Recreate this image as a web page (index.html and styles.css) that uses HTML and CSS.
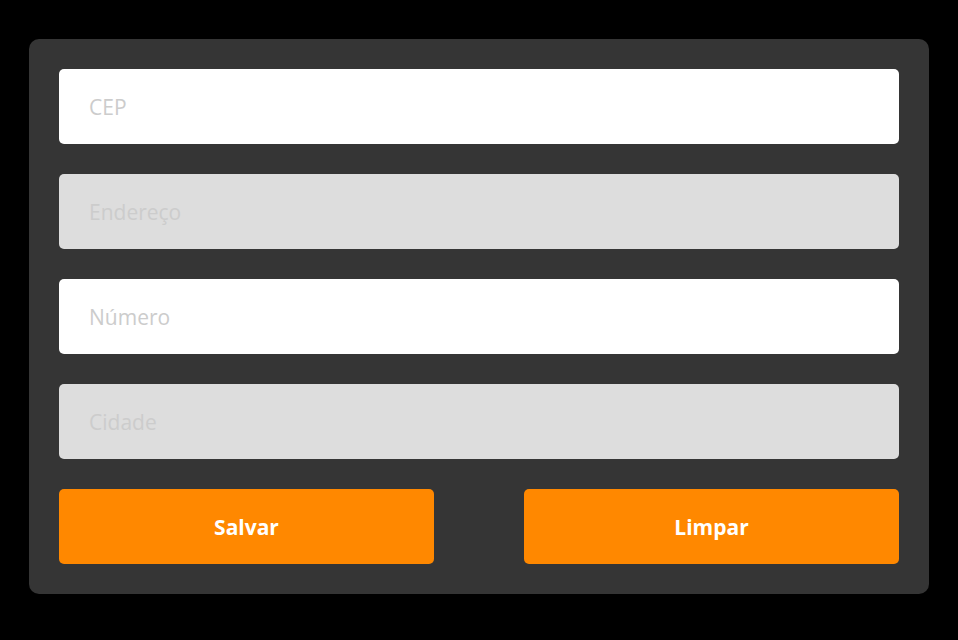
FILE: index.html
```html
<!DOCTYPE html>
<html lang="pt-BR">
<head>
<meta charset="utf-8">
<title>Endereço</title>
<link rel="stylesheet" href="styles.css">
</head>
<body>
<form class="card">
  <input class="field" type="text" placeholder="CEP">
  <input class="field field-disabled" type="text" placeholder="Endereço" disabled>
  <input class="field" type="text" placeholder="Número">
  <input class="field field-disabled" type="text" placeholder="Cidade" disabled>
  <div class="actions">
    <button type="button" class="btn">Salvar</button>
    <button type="button" class="btn">Limpar</button>
  </div>
</form>
</body>
</html>
```
FILE: styles.css
```css
html, body {
  margin: 0;
  padding: 0;
  background: #000;
}
body {
  padding: 39px 29px 0;
  font-family: "Open Sans", "Liberation Sans", sans-serif;
}
.card {
  box-sizing: border-box;
  width: 900px;
  padding: 30px;
  background: #353535;
  border-radius: 10px;
  display: flex;
  flex-direction: column;
  gap: 30px;
}
.field {
  box-sizing: border-box;
  height: 75px;
  width: 100%;
  margin: 0;
  border: none;
  border-radius: 5px;
  background: #fff;
  padding: 1px 30px 0;
  font-family: inherit;
  font-size: 21px;
  color: #333;
  outline: none;
}
.field::placeholder {
  color: #cccccc;
  opacity: 1;
}
.field-disabled {
  background: #dddddd;
}
.actions {
  display: flex;
  justify-content: space-between;
}
.btn {
  width: 375px;
  height: 75px;
  border: none;
  border-radius: 5px;
  background: #ff8800;
  color: #fff;
  font-family: inherit;
  font-weight: 700;
  font-size: 21px;
  cursor: pointer;
}
```
